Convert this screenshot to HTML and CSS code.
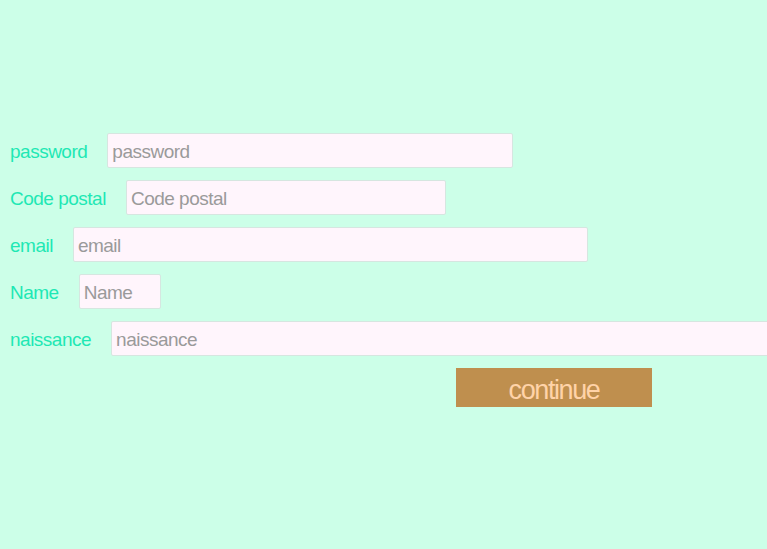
FILE: index.html
```html
<!DOCTYPE html>
<html>
<head>
<meta charset="utf-8">
<link rel="stylesheet" href="styles.css">
</head>
<body>
<form class="form">
  <div class="row"><label class="label">password</label><input class="field w-password" placeholder="password"></div>
  <div class="row"><label class="label">Code postal</label><input class="field w-code" placeholder="Code postal"></div>
  <div class="row"><label class="label">email</label><input class="field w-email" placeholder="email"></div>
  <div class="row"><label class="label">Name</label><input class="field w-name" placeholder="Name"></div>
  <div class="row"><label class="label">naissance</label><input class="field w-naissance" placeholder="naissance"></div>
  <div class="actions"><button type="button" class="btn">continue</button></div>
</form>
</body>
</html>
```

FILE: styles.css
```css
html, body {
  margin: 0;
  padding: 0;
  background: #ccffe8;
  overflow: hidden;
}
body {
  font-family: "Liberation Sans", Arial, sans-serif;
  width: 767px;
  height: 549px;
}
.form {
  padding-top: 133px;
  padding-left: 10px;
  display: flex;
  flex-direction: column;
  gap: 12px;
}
.row {
  display: flex;
  align-items: center;
  height: 35px;
  white-space: nowrap;
}
.label {
  color: #1ee8b4;
  font-size: 19px;
  letter-spacing: -0.5px;
  margin-right: 20px;
  padding-top: 3px;
  flex: none;
}
.field {
  flex: none;
  box-sizing: border-box;
  height: 35px;
  background: #fff5fc;
  border: 1px solid #d6e6e0;
  border-radius: 2px;
  padding: 3px 4px 0;
  font-family: "Liberation Sans", Arial, sans-serif;
  font-size: 19px;
  letter-spacing: -0.5px;
  color: #555;
  outline: none;
}
.field::placeholder {
  color: #9a9a9a;
}
.w-password { width: 406px; }
.w-code { width: 320px; }
.w-email { width: 515px; }
.w-name { width: 82px; }
.w-naissance { width: 700px; }
.actions {
  display: flex;
  padding-left: 446px;
}
.btn {
  width: 196px;
  height: 39px;
  background: #bf8f4e;
  border: none;
  border-radius: 0;
  color: #ffd3a8;
  font-family: "Liberation Sans", Arial, sans-serif;
  font-size: 27px;
  letter-spacing: -1.4px;
  padding: 5px 0 0;
  cursor: pointer;
}
```
